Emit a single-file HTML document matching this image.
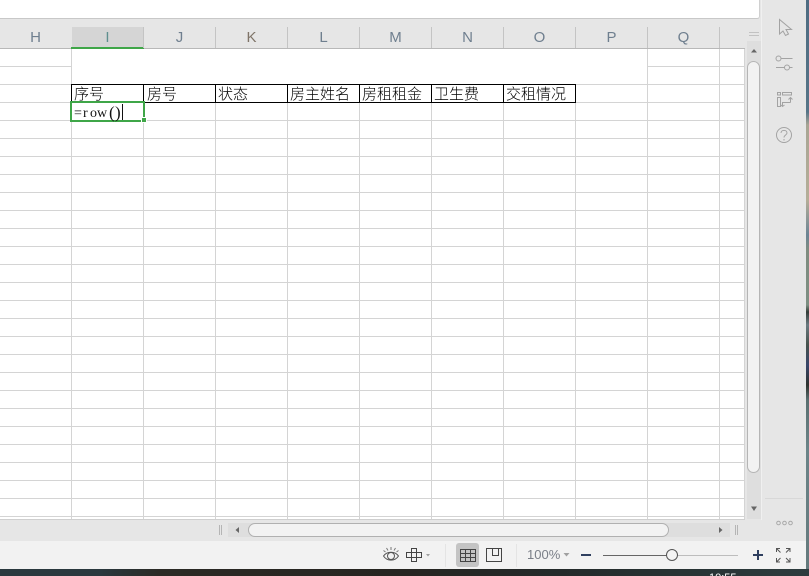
<!DOCTYPE html>
<html lang="zh">
<head>
<meta charset="utf-8">
<title>Sheet</title>
<style>
html,body{margin:0;padding:0;width:809px;height:576px;overflow:hidden;background:#e6e6e6}
.a{position:absolute}
#hdr span{position:absolute;top:27px;width:71px;height:21px;line-height:21px;text-align:center;font:15px/21px "Liberation Sans",sans-serif;color:#6f7f8f}
#hdr i{position:absolute;top:27px;width:1px;height:21px;background:#c4c4c4}
.c{position:absolute;top:85px;height:17px;line-height:17px;font:15px/18px "Noto Sans CJK SC","Liberation Sans",sans-serif;font-weight:300;color:#000;white-space:nowrap}
.v{position:absolute;top:84px;width:1px;height:19px;background:#000}
.f{position:absolute;top:105px;font:14px/18px "Liberation Serif",serif;color:#111}
</style>
</head>
<body>
<div class="a" style="left:0;top:0;width:809px;height:576px;background:#e6e6e6;overflow:hidden">

<!-- top white panel -->
<div class="a" style="left:0;top:0;width:759px;height:18px;background:#fff;border-right:1px solid #d0d0d0;border-bottom:1px solid #c8c8c8;border-bottom-right-radius:3px"></div>

<!-- column header -->
<div id="hdr" class="a" style="left:0;top:0;width:745px;height:49px">
  <div class="a" style="left:72px;top:27px;width:71px;height:20px;background:#d5d5d5"></div>
  <div class="a" style="left:0;top:48px;width:745px;height:1px;background:#b8b8b8"></div>
  <div class="a" style="left:71px;top:47px;width:73px;height:2px;background:#3fa648"></div>
  <span style="left:0">H</span>
  <span style="left:72px;color:#5f8f8f">I</span>
  <span style="left:144px">J</span>
  <span style="left:216px;color:#7f7468">K</span>
  <span style="left:288px">L</span>
  <span style="left:360px">M</span>
  <span style="left:432px">N</span>
  <span style="left:504px">O</span>
  <span style="left:576px">P</span>
  <span style="left:648px">Q</span>
  <i style="left:143px"></i><i style="left:215px"></i><i style="left:287px"></i><i style="left:359px"></i><i style="left:431px"></i><i style="left:503px"></i><i style="left:575px"></i><i style="left:647px"></i><i style="left:719px"></i>
</div>

<!-- grid -->
<div class="a" style="left:0;top:49px;width:745px;height:470px;background-color:#fff;background-image:repeating-linear-gradient(to bottom,transparent 0,transparent 17px,#d4d4d4 17px,#d4d4d4 18px),repeating-linear-gradient(to right,transparent 0,transparent 71px,#d4d4d4 71px,#d4d4d4 72px)"></div>
<div class="a" style="left:72px;top:49px;width:575px;height:35px;background:#fff"></div>
<div class="a" style="left:744px;top:49px;width:1px;height:470px;background:#d4d4d4"></div>
<div class="a" style="left:0;top:519px;width:745px;height:1px;background:#cfcfcf"></div>

<!-- table row -->
<div class="a" style="left:71px;top:84px;width:505px;height:1px;background:#000"></div>
<div class="a" style="left:71px;top:102px;width:505px;height:1px;background:#000"></div>
<i class="v" style="left:71px"></i><i class="v" style="left:143px"></i><i class="v" style="left:215px"></i><i class="v" style="left:287px"></i><i class="v" style="left:359px"></i><i class="v" style="left:431px"></i><i class="v" style="left:503px"></i><i class="v" style="left:575px"></i>
<div class="c" style="left:74px">序号</div>
<div class="c" style="left:147px">房号</div>
<div class="c" style="left:218px">状态</div>
<div class="c" style="left:290px">房主姓名</div>
<div class="c" style="left:362px">房租租金</div>
<div class="c" style="left:434px">卫生费</div>
<div class="c" style="left:506px">交租情况</div>

<!-- active cell -->
<div class="a" style="left:70px;top:101px;width:71px;height:17px;border:2px solid #3fa648;background:#fff"></div>
<div class="a" style="left:142px;top:118px;width:4px;height:4px;background:#3fa648;outline:1px solid #fff"></div>
<div class="f" style="left:74px">=</div>
<div class="f" style="left:83px">r</div>
<div class="f" style="left:90px">o</div>
<div class="f" style="left:97px">w</div>
<div class="f" style="left:109px;top:104px;font-size:17px">(</div>
<div class="f" style="left:115px;top:104px;font-size:17px">)</div>
<div class="a" style="left:122px;top:104px;width:1px;height:16px;background:#111"></div>

<!-- vertical scrollbar -->
<div class="a" style="left:745px;top:27px;width:16px;height:492px;background:#e6e6e6"></div>
<div class="a" style="left:749px;top:32px;width:10px;height:1px;background:#c2c2c2"></div>
<div class="a" style="left:749px;top:35px;width:10px;height:1px;background:#c2c2c2"></div>
<div class="a" style="left:747px;top:41px;width:14px;height:478px;background:#dedede"></div>
<div class="a" style="left:747px;top:61px;width:11px;height:410px;background:#f2f2f2;border:1px solid #b5b5b5;border-radius:7px"></div>
<svg class="a" style="left:747px;top:46px" width="14" height="8"><path d="M4 6.500L7 3L10 6.500Z" fill="#666"/></svg>
<svg class="a" style="left:747px;top:505px" width="14" height="8"><path d="M4 1.500L7 6L10 1.500Z" fill="#666"/></svg>

<!-- separator -->
<div class="a" style="left:761px;top:0;width:1px;height:541px;background:#f0f0f0"></div>
<div class="a" style="left:762px;top:0;width:44px;height:569px;background:#e6e6e6"></div>

<!-- right side icons -->
<svg class="a" style="left:762px;top:10px" width="44" height="140" fill="none" stroke="#a3a3a3" stroke-width="1">
  <path d="M17.500 9.500V24L21 21L23.500 25.500L26.500 24L24 19.500H29.500Z"/>
  <circle cx="16.500" cy="48.500" r="2.500"/>
  <path d="M19 48.500H30.500"/>
  <path d="M14 57.500H22.500"/>
  <circle cx="25" cy="57.500" r="2.500"/>
  <path d="M27.500 57.500H30.500"/>
  <rect x="15.500" y="82.500" width="3" height="2.500"/>
  <rect x="15.500" y="87.500" width="3" height="9"/>
  <rect x="20.500" y="82.500" width="9" height="2.500"/>
  <path d="M28.500 92.500V87.500M26.500 89.500L28.500 87.500L30.500 89.500"/>
  <path d="M28.500 92.500H20.500V96.500M19 95L20.500 96.500L22.500 95"/>
  <circle cx="22" cy="125" r="7.500"/>
  <path d="M19 123C19 119.500 25 119.500 25 123C25 125 22 125 22 127.500"/>
  <path d="M22 129V130.500"/>
</svg>
<div class="a" style="left:765px;top:498px;width:38px;height:1px;background:#d8d8d8"></div>
<svg class="a" style="left:775px;top:520px" width="20" height="7" fill="none" stroke="#a8a8a8"><circle cx="3.500" cy="3" r="1.800"/><circle cx="9.500" cy="3" r="1.800"/><circle cx="15.500" cy="3" r="1.800"/></svg>

<!-- horizontal scrollbar -->
<div class="a" style="left:0;top:520px;width:762px;height:21px;background:#e6e6e6"></div>
<div class="a" style="left:219px;top:525px;width:1px;height:10px;background:#b5b5b5"></div>
<div class="a" style="left:221px;top:525px;width:1px;height:10px;background:#b5b5b5"></div>
<div class="a" style="left:735px;top:525px;width:1px;height:10px;background:#b5b5b5"></div>
<div class="a" style="left:737px;top:525px;width:1px;height:10px;background:#b5b5b5"></div>
<div class="a" style="left:228px;top:523px;width:502px;height:14px;background:#dedede"></div>
<div class="a" style="left:248px;top:523px;width:419px;height:12px;background:#f2f2f2;border:1px solid #b0b0b0;border-radius:7px"></div>
<svg class="a" style="left:233px;top:526px" width="8" height="8"><path d="M6 1L2.500 4L6 7Z" fill="#666"/></svg>
<svg class="a" style="left:717px;top:526px" width="8" height="8"><path d="M2 1L5.500 4L2 7Z" fill="#666"/></svg>

<!-- status bar -->
<div class="a" style="left:0;top:541px;width:806px;height:28px;background:#f2f2f2"></div>
<svg class="a" style="left:380px;top:543px" width="50" height="24" fill="none" stroke="#555" stroke-width="1">
  <path d="M3.500 13C7 8 15 8 18.500 13C15 18.500 7 18.500 3.500 13Z"/>
  <circle cx="11" cy="13" r="3.500"/>
  <path d="M11 4V7M6.500 5L8 7.500M15.500 5L14 7.500M3.500 7.500L5.500 9M18.500 7.500L16.500 9" stroke="#777"/>
  <path d="M31.500 5.500H36.500V9.500H41.500V14.500H36.500V18.500H31.500V14.500H26.500V9.500H31.500ZM31.500 9.500H36.500V14.500H31.500Z" stroke="#444"/>
  <path d="M46 11H50L48 13.500Z" fill="#a0a0a0" stroke="none"/>
</svg>
<div class="a" style="left:445px;top:544px;width:1px;height:23px;background:#e4e4e4"></div>
<div class="a" style="left:456px;top:543px;width:23px;height:24px;background:#c4c4c4;border-radius:3px"></div>
<svg class="a" style="left:456px;top:543px" width="50" height="24" fill="none" stroke="#444" stroke-width="1" shape-rendering="crispEdges">
  <rect x="4.500" y="6.500" width="15" height="12"/>
  <path d="M9.500 6.500V18.500M14.500 6.500V18.500M4.500 10.500H19.500M4.500 14.500H19.500"/>
  <rect x="30.500" y="5.500" width="15" height="13"/>
  <path d="M36.500 5.500V12.500H42.500V5.500"/>
</svg>
<div class="a" style="left:516px;top:544px;width:1px;height:23px;background:#e4e4e4"></div>
<div class="a" style="left:527px;top:546px;font:13px/18px 'Liberation Sans',sans-serif;color:#7a7f88">100%</div>
<svg class="a" style="left:563px;top:552px" width="8" height="6"><path d="M0.500 1H6.500L3.500 4.500Z" fill="#a0a0a0"/></svg>
<div class="a" style="left:581px;top:554px;width:10px;height:2px;background:#2f3f5f"></div>
<div class="a" style="left:603px;top:555px;width:64px;height:1px;background:#666"></div>
<div class="a" style="left:677px;top:555px;width:61px;height:1px;background:#bdbdbd"></div>
<div class="a" style="left:666px;top:549px;width:10px;height:10px;background:#f4f4f4;border:1px solid #555;border-radius:50%"></div>
<div class="a" style="left:753px;top:554px;width:10px;height:2px;background:#2f3f5f"></div>
<div class="a" style="left:757px;top:550px;width:2px;height:10px;background:#2f3f5f"></div>
<svg class="a" style="left:775px;top:547px" width="17" height="17" fill="none" stroke="#555" stroke-width="1">
  <path d="M1.500 5V1.500H5M1.500 1.500L5.500 5.500M11 1.500H15V5M15 1.500L11 5.500M1.500 11V15H5M1.500 15L5.500 11M15 11V15H11M15 15L11 11"/>
</svg>

<!-- desktop wallpaper strips -->
<div class="a" style="left:806px;top:0;width:3px;height:576px;background:linear-gradient(to bottom,#4e6c82 0,#567487 112px,#a8a594 125px,#b5ae98 200px,#6b8494 235px,#7f8c80 250px,#7d8f82 305px,#333c38 312px,#6b7a80 325px,#46524c 345px,#39466a 365px,#2e332e 385px,#5a6f70 400px,#6b8488 450px,#64797c 569px,#283437 570px)"></div>
<div class="a" style="left:0;top:569px;width:809px;height:7px;background:linear-gradient(to right,#2a383e 0,#2a383e 100px,#2b2a25 160px,#262420 400px,#232a2a 560px,#2d3c3e 809px);overflow:hidden">
  <div class="a" style="left:709px;top:3px;font:11px/13px 'Liberation Sans',sans-serif;color:#fff">10:55</div>
</div>
</div>
</body>
</html>
